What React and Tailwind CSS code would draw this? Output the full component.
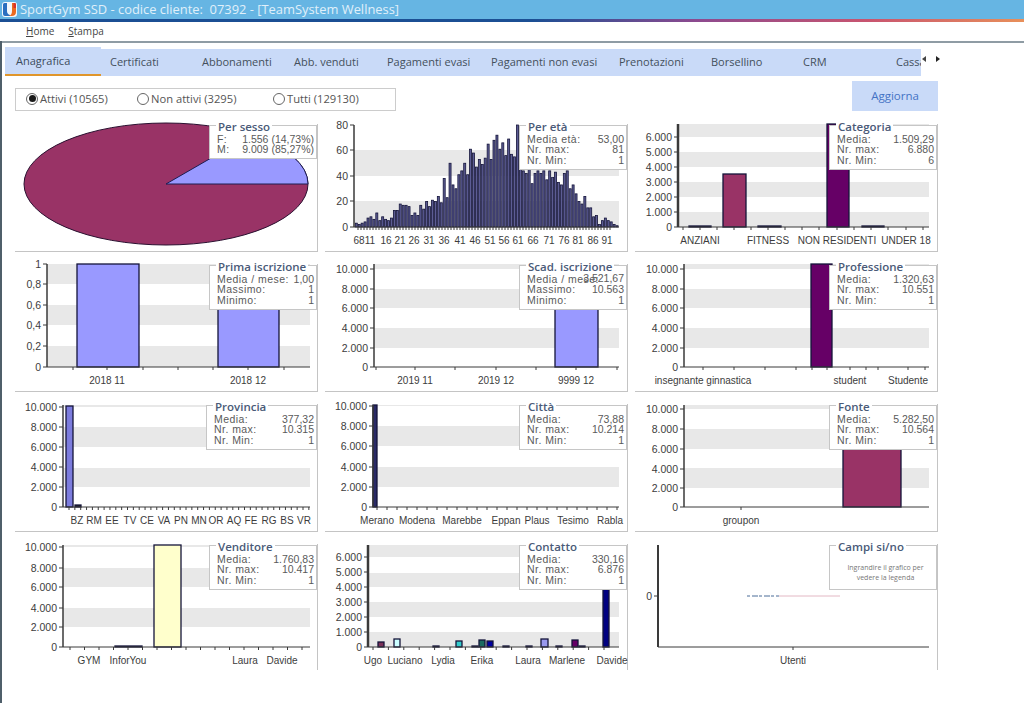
import React from "react";

const F = '"Liberation Sans", Arial, sans-serif';
const AX = "#3a3a3a";
const MAROON = "#993366";
const PERI = "#9999ff";
const PURPLE = "#660066";

function PieChart() {
  const [cx, cy, rx, ry] = [151, 60, 142, 61];
  return (
    <svg width="303" height="128" className="block overflow-visible">
      <ellipse cx={cx} cy={cy} rx={rx} ry={ry} fill={MAROON} stroke="#2a1030" strokeWidth="1" />
      <path d={`M${cx} ${cy} L${cx + 85} ${cy - 49} A${rx} ${ry} 0 0 1 ${cx + rx} ${cy} Z`} fill={PERI} stroke="#1c1c50" strokeWidth="1" />
    </svg>
  );
}

function Chart({ c }) {
  const { ox, oy, x0, x1, y0, top, yt = [], stripes = [], bars = [], xl = [], ticks = [], thick = 1.5 } = c;
  const X = (v) => v - ox;
  const Y = (v) => v - oy;
  return (
    <svg width="303" height="128" className="block overflow-visible" style={{ fontFamily: F }}>
      {stripes.map(([a, b], i) => (
        <rect key={i} x={X(x0)} y={Y(a)} width={x1 - x0} height={b - a} fill="#e8e8e8" />
      ))}
      {bars.map(([a, b, t, col, sw = 1.3], i) => (
        <rect key={i} x={X(a)} y={Y(t)} width={b - a} height={y0 - t} fill={col} stroke="#14143a" strokeWidth={sw} />
      ))}
      <line x1={X(x0)} y1={Y(top)} x2={X(x0)} y2={Y(y0)} stroke={AX} strokeWidth={thick} />
      <line x1={X(x0)} y1={Y(y0)} x2={X(x1)} y2={Y(y0)} stroke={AX} strokeWidth="1" />
      {yt.map(([lab, y], i) => (
        <g key={i}>
          <line x1={X(x0) - 4} y1={Y(y)} x2={X(x0)} y2={Y(y)} stroke={AX} />
          <text x={X(x0) - 6} y={Y(y) + 4} textAnchor="end" fontSize="10.5" fill="#3c3c3c">{lab}</text>
        </g>
      ))}
      {ticks.map((x, i) => (
        <line key={i} x1={X(x)} y1={Y(y0)} x2={X(x)} y2={Y(y0) + 3} stroke={AX} />
      ))}
      {xl.map(([lab, x], i) => (
        <text key={i} x={X(x)} y={Y(y0) + 17} textAnchor="middle" fontSize="10" fill="#3c3c3c">{lab}</text>
      ))}
    </svg>
  );
}

function Legend({ title, rows, note, h = 45, w = 108 }) {
  return (
    <div className="absolute right-0 top-[1px] border border-[#c6c6c6] bg-white pl-[7px] pr-[2px] text-[#5a5a5a]" style={{ width: w, height: h, fontFamily: F }}>
      <div className="absolute left-[6px] top-[-6px] bg-white px-[2px] text-[11.5px] leading-[13px] font-semibold text-[#4a5a78]" style={{ fontFamily: '"Open Sans", sans-serif' }}>
        {title}
      </div>
      {note ? (
        <div className="mt-[17px] text-center text-[7px] leading-[10px] text-[#777777]" style={{ fontFamily: '"Open Sans", sans-serif' }}>
          Ingrandire il grafico per<br />vedere la legenda
        </div>
      ) : (
        <div className="mt-[8px] flex flex-col text-[10.5px] leading-[10.7px]">
          {rows.map(([a, b], i) => (
            <div key={i} className="flex justify-between">
              <span className="tracking-[0.45px]">{a}</span>
              <span>{b}</span>
            </div>
          ))}
        </div>
      )}
    </div>
  );
}

const range = (a, b, s) => {
  const r = [];
  for (let v = a; v <= b + 0.01; v += s) r.push(v);
  return r;
};

const TEN = (t) => [["10.000", t[0]], ["8.000", t[1]], ["6.000", t[2]], ["4.000", t[3]], ["2.000", t[4]], ["0", t[5]]];
const SIX = (b) => [["6.000", b - 90], ["5.000", b - 75], ["4.000", b - 60], ["3.000", b - 45], ["2.000", b - 30], ["1.000", b - 15], ["0", b]];

const ages = [3,2,3,4,7,8,6,11,5,8,6,5,7,13,13,18,17,17,16,9,11,9,17,14,20,16,21,20,24,19,38,23,50,33,30,41,44,50,41,61,58,47,53,49,54,65,53,68,72,61,66,56,69,57,55,80,49,44,42,45,34,42,44,42,44,37,44,39,43,35,33,42,44,30,33,26,20,18,24,15,15,8,9,2,5,7,5,4,2,1];

const charts = {
  eta: {
    ox: 325, oy: 124, x0: 354, x1: 619, y0: 227, top: 125,
    yt: [["80", 125], ["60", 150], ["40", 176], ["20", 201], ["0", 227]],
    stripes: [[150, 176], [201, 227]],
    bars: ages.map((v, i) => [355.3 + i * 2.93, 355.3 + i * 2.93 + 2, 227 - v * 1.275, "#5c5c94", 0.8]),
    ticks: range(358, 610, 3),
    xl: [["68", 359], ["11", 370], ["16", 386], ["21", 400], ["26", 414], ["31", 429], ["36", 444], ["41", 460], ["46", 475], ["51", 490], ["56", 504], ["61", 518], ["66", 533], ["71", 549], ["76", 564], ["81", 578], ["86", 593], ["91", 607]],
  },
  cat: {
    ox: 635, oy: 124, x0: 678, x1: 929, y0: 227, top: 124, thick: 2.5,
    yt: SIX(227),
    stripes: [[124, 137], [152, 167], [182, 197], [212, 227]],
    bars: [[689, 711, 226, "#333"], [723, 746, 174, MAROON], [758, 781, 226, "#333"], [827, 849, 124, PURPLE], [862, 884, 226, "#333"]],
    ticks: [683, 700, 717, 734, 751, 768, 785, 802, 819, 837, 854, 871, 888, 906, 923],
    xl: [["ANZIANI", 700], ["FITNESS", 768], ["NON RESIDENTI", 837], ["UNDER 18", 906]],
  },
  prima: {
    ox: 15, oy: 264, x0: 47, x1: 310, y0: 367, top: 264,
    yt: [["1", 264], ["0,8", 284], ["0,6", 305], ["0,4", 325], ["0,2", 346], ["0", 367]],
    stripes: [[264, 284], [305, 325], [346, 367]],
    bars: [[77, 139, 264, PERI], [218, 279, 264, PERI]],
    ticks: [73, 107, 143, 178, 213, 248, 284],
    xl: [["2018 11", 107], ["2018 12", 248]],
  },
  scad: {
    ox: 325, oy: 264, x0: 374, x1: 619, y0: 367, top: 264,
    yt: TEN([269, 289, 308, 328, 348, 367]),
    stripes: [[264, 269], [289, 308], [328, 348]],
    bars: [[555, 598, 268, PERI]],
    ticks: [376, 415, 455, 496, 536, 576, 617],
    xl: [["2019 11", 415], ["2019 12", 496], ["9999 12", 576]],
  },
  prof: {
    ox: 635, oy: 264, x0: 684, x1: 929, y0: 367, top: 264,
    yt: TEN([269, 289, 308, 328, 348, 367]),
    stripes: [[264, 269], [289, 308], [328, 348]],
    bars: [[811, 832, 264, PURPLE]],
    ticks: [703, 734, 765, 796, 812, 827, 850, 866, 878, 908, 925],
    xl: [["insegnante ginnastica", 703], ["student", 850], ["Studente", 908]],
  },
  prov: {
    ox: 15, oy: 404, x0: 63, x1: 310, y0: 507, top: 405,
    yt: TEN([407, 427, 447, 467, 487, 507]),
    stripes: [[405, 407], [427, 447], [468, 487]],
    bars: [[66, 73, 406, "#7c7cdd"], [75, 81, 505, "#222"]],
    ticks: range(69, 310, 5.85),
    xl: [["BZ", 77], ["RM", 94], ["EE", 112], ["TV", 130], ["CE", 147], ["VA", 164], ["PN", 181], ["MN", 199], ["OR", 216], ["AQ", 234], ["FE", 251], ["RG", 269], ["BS", 287], ["VR", 304]],
  },
  citta: {
    ox: 325, oy: 404, x0: 373, x1: 619, y0: 507, top: 405,
    yt: TEN([406, 426, 446, 467, 487, 507]),
    stripes: [[405, 406], [426, 446], [467, 487]],
    bars: [[373, 377, 405, "#2a2a66"]],
    ticks: range(377, 619, 10),
    xl: [["Merano", 377], ["Modena", 417], ["Marebbe", 462], ["Eppan", 506], ["Plaus", 537], ["Tesimo", 573], ["Rabla", 610]],
  },
  fonte: {
    ox: 635, oy: 404, x0: 684, x1: 929, y0: 507, top: 405,
    yt: TEN([409, 429, 449, 469, 488, 507]),
    stripes: [[405, 409], [429, 449], [468, 488]],
    bars: [[843, 901, 408, MAROON]],
    ticks: [741],
    xl: [["groupon", 741]],
  },
  vend: {
    ox: 15, oy: 544, x0: 63, x1: 310, y0: 647, top: 545,
    yt: TEN([547, 568, 587, 608, 627, 647]),
    stripes: [[545, 547], [568, 587], [608, 627]],
    bars: [[115, 142, 646, "#333"], [154, 181, 545, "#ffffcc"]],
    ticks: range(70, 310, 14.5),
    xl: [["GYM", 89], ["InforYou", 128], ["Laura", 245], ["Davide", 282]],
  },
  cont: {
    ox: 325, oy: 544, x0: 368, x1: 619, y0: 647, top: 545, thick: 2.5,
    yt: SIX(647),
    stripes: [[545, 557], [573, 587], [602, 617], [632, 647]],
    bars: [
      [378, 384, 642, "#7a3058"], [394, 400, 639, "#ccffff"], [433, 439, 646, "#333"], [456, 462, 641, "#33cccc"],
      [472, 478, 646, "#333"], [479, 485, 640, "#1a6b60"], [487, 493, 641, "#0000a0"], [503, 509, 646, "#333"],
      [526, 532, 646, "#333"], [541, 548, 639, "#9999ee"], [556, 562, 646, "#333"], [572, 578, 640, PURPLE],
      [579, 585, 646, "#333"], [603, 609, 560, "#000080"],
    ],
    ticks: range(373, 619, 15.4),
    xl: [["Ugo", 373], ["Luciano", 405], ["Lydia", 443], ["Erika", 482], ["Laura", 528], ["Marlene", 567], ["Davide", 612]],
  },
  campi: {
    ox: 635, oy: 544, x0: 658, x1: 929, y0: 647, top: 545, thick: 2,
    yt: [["0", 596]],
    ticks: [793],
    xl: [["Utenti", 793]],
  },
};

function Cell({ children, last }) {
  return (
    <div className={`relative w-[303px] border-r border-[#c4c4c4] ${last ? "h-[126px]" : "h-[128px] border-b"}`}>
      {children}
    </div>
  );
}

const M3 = (a, b, c) => [["Media:", a], ["Nr. max:", b], ["Nr. Min:", c]];

function Radio({ on, label, className }) {
  return (
    <div className={`flex items-center gap-[2px] ${className}`}>
      <span className="flex h-[12px] w-[12px] items-center justify-center rounded-full border border-[#666666] bg-white">
        {on && <span className="h-[7px] w-[7px] rounded-full bg-[#1a1a1a]" />}
      </span>
      <span>{label}</span>
    </div>
  );
}

const tabs = [
  ["Certificati", "w-[101px] pl-[9px]"],
  ["Abbonamenti", "w-[92px]"],
  ["Abb. venduti", "w-[93px]"],
  ["Pagamenti evasi", "w-[104px]"],
  ["Pagamenti non evasi", "w-[128px]"],
  ["Prenotazioni", "w-[92px]"],
  ["Borsellino", "w-[92px]"],
  ["CRM", "w-[93px]"],
];

export default function App() {
  return (
    <div className="relative h-[703px] w-[1024px] overflow-hidden bg-white" style={{ fontFamily: '"Open Sans", sans-serif' }}>
      {/* title bar */}
      <div className="flex h-[19px] items-center bg-[#66b5e3] pl-[2px]">
        <svg width="15" height="15" viewBox="0 0 15 15" className="shrink-0">
          <rect x="0" y="0" width="15" height="15" rx="3" fill="#f4f8fb" />
          <path d="M1 2.5 Q1 1 2.5 1 H5 V9 Q5 12 8 13 V14 H3 Q1 14 1 12 Z" fill="#2a6fc0" />
          <path d="M10 1 H12.5 Q14 1 14 2.5 V10 Q14 14 9.5 14 H7 Q10 13 10 9 Z" fill="#ea6a1f" />
          <path d="M11.5 1 H13 Q14 1 14 2.5 V6 H11.5 Z" fill="#d8322a" />
        </svg>
        <span className="ml-[3px] whitespace-pre text-[12.9px] text-[#e0f0fa]">SportGym SSD - codice cliente:  07392 - [TeamSystem Wellness]</span>
      </div>
      <div className="h-[3px] bg-[linear-gradient(to_right,#1b4f94_0%,#1b4f94_52%,#8d4a8f_68%,#c9556f_85%,#e8905a_100%)]" />
      {/* menu */}
      <div className="flex h-[19px] items-center gap-[14px] pl-[26px] text-[10px] text-[#444444]">
        <span><u>H</u>ome</span>
        <span><u>S</u>tampa</span>
      </div>
      <div className="h-[1.5px] bg-[#8f9ca4]" />
      {/* window left edge */}
      <div className="absolute bottom-0 left-0 top-[41px] w-[1.5px] bg-[#4f5f6a]" />
      {/* tabs */}
      <div className="relative ml-[5px] mt-[6px] flex h-[27px] w-[916px] items-center bg-[#c9daf8] text-[11px] text-[#44505c]">
        <div className="absolute left-0 top-[-2px] flex h-[29px] w-[96px] items-center border-b-2 border-[#e0962c] bg-[#c9daf8] pl-[11px] pt-[2px] text-[#3c4c5c]">Anagrafica</div>
        <div className="ml-[96px] flex w-[820px] items-center overflow-hidden whitespace-nowrap">
          {tabs.map(([t, cls]) => (
            <div key={t} className={`shrink-0 ${cls}`}>{t}</div>
          ))}
          <div className="w-[25px] shrink-0 overflow-hidden">Cassa</div>
        </div>
        <span className="absolute left-[917px] top-[7px] h-0 w-0 border-y-[3px] border-r-[4px] border-y-transparent border-r-[#444444]" />
        <span className="absolute left-[931px] top-[7px] h-0 w-0 border-y-[3px] border-l-[4px] border-y-transparent border-l-[#222222]" />
      </div>
      {/* filter row */}
      <div className="mt-[5px] flex h-[30px] items-end pl-[15px] pr-[86px]">
        <div className="flex h-[23px] w-[381px] items-center border border-[#cccccc] pl-[10px] text-[11.2px] text-[#555555]">
          <Radio on label="Attivi (10565)" className="w-[111px]" />
          <Radio label="Non attivi (3295)" className="w-[136px]" />
          <Radio label="Tutti (129130)" />
        </div>
        <div className="ml-auto flex h-[30px] w-[86px] items-center justify-center bg-[#c9daf8] text-[11.5px] text-[#4472c4]">Aggiorna</div>
      </div>
      {/* grid */}
      <div className="mt-[13px] ml-[15px] grid grid-cols-[303px_303px_303px] gap-x-[7px] gap-y-[12px]">
        <Cell>
          <PieChart />
          <Legend title="Per sesso" h={34} w={108} rows={[["F:", "1.556 (14,73%)"], ["M:", "9.009 (85,27%)"]]} />
        </Cell>
        <Cell><Chart c={charts.eta} /><Legend title="Per età" rows={[["Media età:", "53,00"], ["Nr. max:", "81"], ["Nr. Min:", "1"]]} /></Cell>
        <Cell><Chart c={charts.cat} /><Legend title="Categoria" rows={M3("1.509,29", "6.880", "6")} /></Cell>

        <Cell><Chart c={charts.prima} /><Legend title="Prima iscrizione" rows={[["Media / mese:", "1,00"], ["Massimo:", "1"], ["Minimo:", "1"]]} /></Cell>
        <Cell>
          <Chart c={charts.scad} />
          <Legend title="Scad. iscrizione" rows={[["Media / mese:", ""], ["Massimo:", "10.563"], ["Minimo:", "1"]]} />
          <span className="absolute right-[3px] top-[9px] text-[10.5px] leading-[11px] text-[#5a5a5a]" style={{ fontFamily: F }}>3.521,67</span>
        </Cell>
        <Cell><Chart c={charts.prof} /><Legend title="Professione" rows={M3("1.320,63", "10.551", "1")} /></Cell>

        <Cell><Chart c={charts.prov} /><Legend title="Provincia" w={111} rows={M3("377,32", "10.315", "1")} /></Cell>
        <Cell><Chart c={charts.citta} /><Legend title="Città" rows={M3("73,88", "10.214", "1")} /></Cell>
        <Cell><Chart c={charts.fonte} /><Legend title="Fonte" rows={M3("5.282,50", "10.564", "1")} /></Cell>

        <Cell last><Chart c={charts.vend} /><Legend title="Venditore" rows={M3("1.760,83", "10.417", "1")} /></Cell>
        <Cell last><Chart c={charts.cont} /><Legend title="Contatto" rows={M3("330,16", "6.876", "1")} /></Cell>
        <Cell last>
          <Chart c={charts.campi} />
          <svg width="303" height="128" className="absolute left-0 top-0">
            <line x1="112" y1="52" x2="144" y2="52" stroke="#4a6c98" strokeWidth="1" strokeDasharray="3 2 6 1" />
            <line x1="144" y1="52" x2="205" y2="52" stroke="#e3b8c4" strokeWidth="1" />
          </svg>
          <Legend title="Campi si/no" note />
        </Cell>
      </div>
    </div>
  );
}
